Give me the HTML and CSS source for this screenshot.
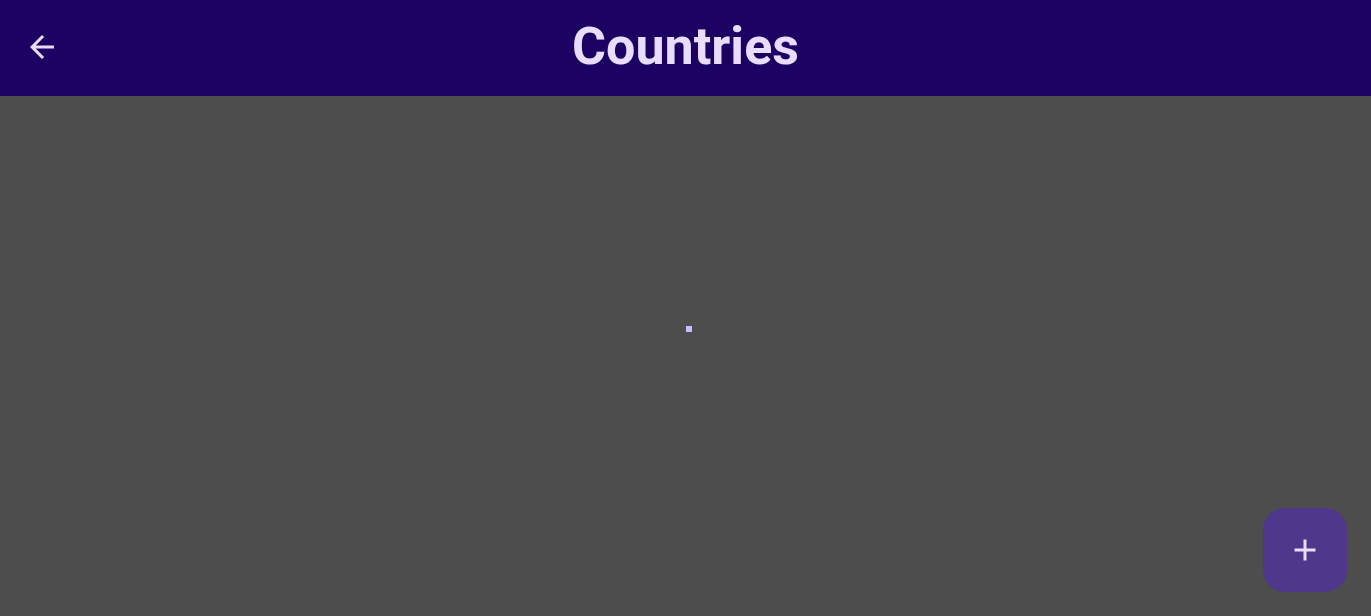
FILE: index.html
```html
<!DOCTYPE html>
<html lang="en">
<head>
<meta charset="utf-8">
<title>Countries</title>
<link rel="stylesheet" href="styles.css">
</head>
<body>
<div class="app">
  <header class="topbar">
    <button class="back" aria-label="Back">
      <svg viewBox="0 0 24 24" width="36" height="36"><path d="M20 11H7.83l5.59-5.59L12 4l-8 8 8 8 1.41-1.41L7.83 13H20v-2z" fill="currentColor"/></svg>
    </button>
    <h1 class="title">Countries</h1>
    <div class="spacer"></div>
  </header>
  <main class="content">
    <div class="spinner"><span class="arc"></span></div>
    <button class="fab" aria-label="Add">
      <svg viewBox="0 0 24 24" width="36" height="36"><path d="M19 13h-6v6h-2v-6H5v-2h6V5h2v6h6v2z" fill="currentColor"/></svg>
    </button>
  </main>
</div>
</body>
</html>
```

FILE: styles.css
```css
* { box-sizing: border-box; }
html, body { margin: 0; padding: 0; height: 100%; }
body {
  font-family: Roboto, "Noto Sans", sans-serif;
  background: #4d4d4d;
}
.app {
  display: flex;
  flex-direction: column;
  height: 616px;
}
.topbar {
  height: 96px;
  flex: 0 0 96px;
  background: #1c0062;
  display: grid;
  grid-template-columns: 84px 1fr 84px;
  align-items: center;
}
.back {
  width: 60px;
  height: 60px;
  margin-left: 12px;
  margin-top: -2px;
  border: none;
  background: transparent;
  color: #e9ddff;
  padding: 0;
  display: flex;
  align-items: center;
  justify-content: center;
}
.title {
  margin: 0;
  text-align: center;
  color: #e9ddff;
  font-weight: 700;
  font-size: 52px;
  line-height: 1;
  margin-top: -2px;
}
.content {
  position: relative;
  flex: 1;
  display: flex;
  align-items: center;
  justify-content: center;
}
.spinner {
  position: relative;
  width: 56px;
  height: 56px;
}
.arc {
  position: absolute;
  top: -2px;
  left: 28px;
  width: 6px;
  height: 6px;
  background: #c7bfff;
}
.fab {
  position: absolute;
  right: 24px;
  bottom: 24px;
  width: 84px;
  height: 84px;
  border: none;
  border-radius: 22px;
  background: #4f378b;
  color: #eaddff;
  display: flex;
  align-items: center;
  justify-content: center;
  padding: 0;
}
```
